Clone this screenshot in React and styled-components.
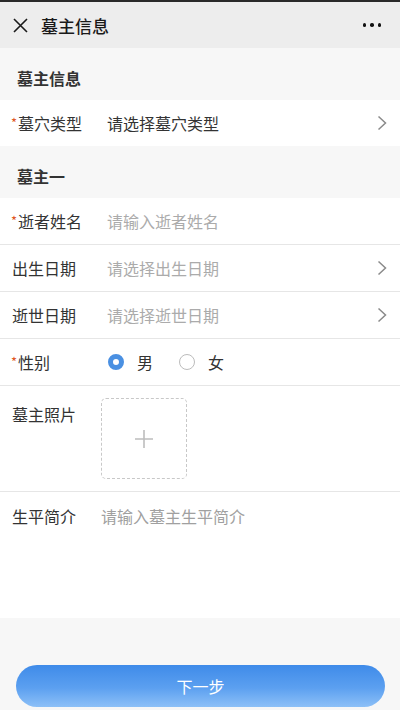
import React from "react";
import styled, { createGlobalStyle } from "styled-components";

const GlobalStyle = createGlobalStyle`
  body {
    margin: 0;
    font-family: "Noto Sans CJK SC", "Noto Sans", sans-serif;
    color: #333;
    background: #fff;
  }
  * { box-sizing: border-box; }
`;

const Page = styled.div`
  width: 400px;
  height: 710px;
  display: flex;
  flex-direction: column;
  border-top: 2px solid #2a2a2a;
  background: #fff;
  overflow: hidden;
`;

const TopBar = styled.div`
  height: 46px;
  flex-shrink: 0;
  background: #ededed;
  display: flex;
  align-items: center;
  padding: 0 19px 0 13px;
`;

const Title = styled.div`
  flex: 1;
  margin-left: 13px;
  font-size: 17px;
  font-weight: 500;
  color: #1a1a1a;
`;

const Dots = styled.div`
  display: flex;
  gap: 4px;
  span {
    width: 3.5px;
    height: 3.5px;
    border-radius: 50%;
    background: #111;
  }
`;

const SectionTitle = styled.div`
  height: 52px;
  flex-shrink: 0;
  background: #f7f7f7;
  display: flex;
  align-items: center;
  padding: 7px 0 0 17px;
  font-size: 16px;
  font-weight: 700;
  color: #333;
`;

const Row = styled.div`
  height: ${(p) => (p.$last ? "46px" : "47px")};
  flex-shrink: 0;
  display: flex;
  align-items: center;
  padding: 0 13px 0 11px;
  border-bottom: ${(p) => (p.$last ? "none" : "1px solid #e6e6e6")};
`;

const Label = styled.div`
  width: 96px;
  flex-shrink: 0;
  font-size: 16px;
  color: #333;
  padding-left: ${(p) => (p.$required ? "0" : "1px")};
`;

const Star = styled.span`
  color: #e0561f;
  font-size: 13px;
  vertical-align: 2px;
  margin-right: 1px;
`;

const Value = styled.div`
  flex: 1;
  font-size: 16px;
  color: ${(p) => (p.$muted ? "#ababab" : "#333")};
`;

const TextInput = styled.input`
  flex: 1;
  border: none;
  outline: none;
  padding: 0;
  font-family: inherit;
  font-size: 16px;
  color: #333;
  background: transparent;
  &::placeholder { color: #ababab; }
`;

const RadioGroup = styled.div`
  display: flex;
  align-items: center;
  gap: 26px;
  padding-left: 1px;
`;

const RadioOption = styled.label`
  display: flex;
  align-items: center;
  gap: 13px;
  font-size: 16px;
  color: #333;
`;

const RadioDot = styled.span`
  width: 16px;
  height: 16px;
  border-radius: 50%;
  border: ${(p) => (p.$checked ? "5px solid #4a90e2" : "1px solid #bcbcbc")};
  background: #fff;
`;

const PhotoRow = styled.div`
  flex-shrink: 0;
  display: flex;
  align-items: flex-start;
  padding: 12px 13px 12px 11px;
  border-bottom: 1px solid #e6e6e6;
  ${Label} { margin-top: 4px; }
`;

const Upload = styled.div`
  width: 86px;
  height: 81px;
  margin-left: -6px;
  border: 1px dashed #c8c8c8;
  border-radius: 5px;
  display: flex;
  align-items: center;
  justify-content: center;
`;

const IntroRow = styled.div`
  flex: 1;
  display: flex;
  align-items: flex-start;
  padding: 12px 13px 0 11px;
`;

const TextArea = styled.textarea`
  flex: 1;
  height: 90px;
  margin-left: -6px;
  border: none;
  outline: none;
  resize: none;
  padding: 0;
  font-family: inherit;
  font-size: 16px;
  line-height: 24px;
  color: #333;
  background: transparent;
  &::placeholder { color: #a0a0a0; }
`;

const Footer = styled.div`
  height: 92px;
  flex-shrink: 0;
  background: #f7f7f7;
  padding: 47px 15px 0 16px;
`;

const NextButton = styled.button`
  width: 100%;
  height: 42px;
  border: none;
  border-radius: 21px;
  background: linear-gradient(180deg, #3f8be9 0%, #5ca0f0 55%, #8dc0f7 100%);
  color: #fff;
  font-family: inherit;
  font-size: 16px;
`;

const Chevron = () => (
  <svg width="10" height="16" viewBox="0 0 10 16">
    <polyline points="1.5,1.5 8.5,8 1.5,14.5" fill="none" stroke="#8a8a8a" strokeWidth="1.5" />
  </svg>
);

const CloseIcon = () => (
  <svg width="15" height="15" viewBox="0 0 15 15">
    <path d="M1 1 L14 14 M14 1 L1 14" stroke="#1a1a1a" strokeWidth="1.6" />
  </svg>
);

const PlusIcon = () => (
  <svg width="18" height="18" viewBox="0 0 18 18">
    <path d="M9 0 V18 M0 9 H18" stroke="#bdbdbd" strokeWidth="1.6" />
  </svg>
);

function Field({ label, required, children, chevron, last }) {
  return (
    <Row $last={last}>
      <Label $required={required}>
        {required && <Star>*</Star>}
        {label}
      </Label>
      {children}
      {chevron && <Chevron />}
    </Row>
  );
}

export default function App() {
  return (
    <>
      <GlobalStyle />
      <Page>
        <TopBar>
          <CloseIcon />
          <Title>墓主信息</Title>
          <Dots>
            <span />
            <span />
            <span />
          </Dots>
        </TopBar>

        <SectionTitle>墓主信息</SectionTitle>
        <Field label="墓穴类型" required chevron last>
          <Value>请选择墓穴类型</Value>
        </Field>

        <SectionTitle>墓主一</SectionTitle>
        <Field label="逝者姓名" required>
          <TextInput placeholder="请输入逝者姓名" />
        </Field>
        <Field label="出生日期" chevron>
          <Value $muted>请选择出生日期</Value>
        </Field>
        <Field label="逝世日期" chevron>
          <Value $muted>请选择逝世日期</Value>
        </Field>
        <Field label="性别" required>
          <RadioGroup>
            <RadioOption>
              <RadioDot $checked />男
            </RadioOption>
            <RadioOption>
              <RadioDot />女
            </RadioOption>
          </RadioGroup>
        </Field>

        <PhotoRow>
          <Label>墓主照片</Label>
          <Upload>
            <PlusIcon />
          </Upload>
        </PhotoRow>

        <IntroRow>
          <Label>生平简介</Label>
          <TextArea placeholder="请输入墓主生平简介" />
        </IntroRow>

        <Footer>
          <NextButton>下一步</NextButton>
        </Footer>
      </Page>
    </>
  );
}
